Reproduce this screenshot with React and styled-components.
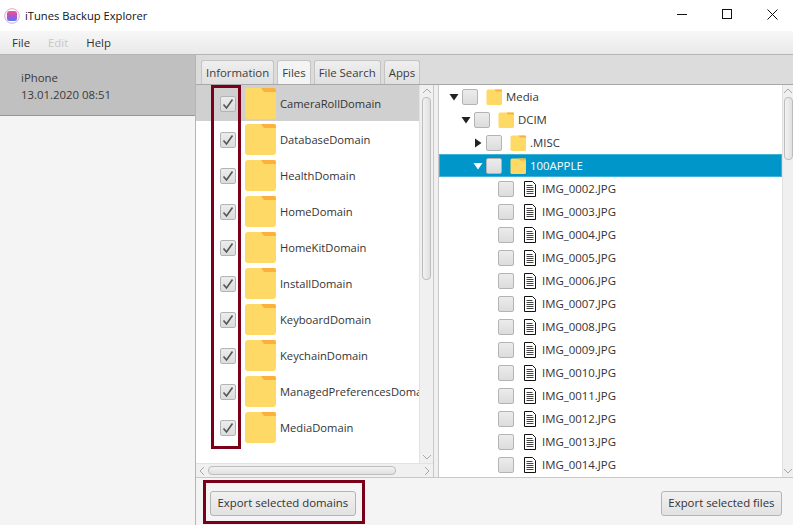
import React from 'react';
import styled, { createGlobalStyle } from 'styled-components';

const GlobalStyle = createGlobalStyle`
  html, body {
    margin: 0;
    padding: 0;
    background: #fff;
    overflow: hidden;
  }
  * { box-sizing: border-box; }
`;

const Window = styled.div`
  position: relative;
  width: 793px;
  height: 525px;
  display: flex;
  flex-direction: column;
  overflow: hidden;
  font-family: "Open Sans", "Noto Sans", sans-serif;
  font-size: 11.4px;
  color: #333;
`;

const TitleBar = styled.div`
  height: 31px;
  display: flex;
  align-items: center;
  background: #fff;
  padding-left: 4px;
  color: #111;
`;

const TitleText = styled.span`
  margin: 0 0 1px 5px;
  font-size: 11.2px;
`;

const WinButtons = styled.div`
  margin: 0 -2px 0 auto;
  align-self: flex-start;
  display: flex;
`;

const WinButton = styled.div`
  width: 45px;
  height: 29px;
  display: flex;
  align-items: center;
  justify-content: center;
`;

const MenuBar = styled.div`
  height: 24px;
  display: flex;
  align-items: center;
  padding-left: 12px;
  gap: 18px;
  background: linear-gradient(#f7f7f7, #e9e9e9);
  border-bottom: 1px solid #b5b5b5;
`;

const MenuItem = styled.span`
  color: ${p => (p.$disabled ? '#c8c8c8' : '#333')};
`;

const Main = styled.div`
  flex: 1;
  display: flex;
  min-height: 0;
`;

const Sidebar = styled.div`
  width: 196px;
  background: #f4f4f4;
  border-right: 1px solid #b5b5b5;
`;

const DeviceRow = styled.div`
  height: 61px;
  padding: 14px 0 0 21px;
  line-height: 17px;
  background: #c0c0c0;
  border-bottom: 1px solid #969696;
  color: #3a3a3a;
`;

const Content = styled.div`
  flex: 1;
  display: flex;
  flex-direction: column;
  min-width: 0;
`;

const TabHeader = styled.div`
  height: 30px;
  display: flex;
  align-items: flex-end;
  gap: 3px;
  padding-left: 5px;
  background: #dcdcdc;
  border-bottom: 1px solid #a8a8a8;
`;

const Tab = styled.div`
  height: 24px;
  padding: 0 4px;
  display: flex;
  align-items: center;
  border: 1px solid #c4c4c4;
  border-bottom: none;
  border-radius: 3px 3px 0 0;
  background: ${p => (p.$active ? '#f4f4f4' : 'linear-gradient(#efefef, #e0e0e0)')};
  color: #3c3c3c;
`;

const Panes = styled.div`
  flex: 1;
  display: flex;
  min-height: 0;
`;

const DomainPane = styled.div`
  width: 238px;
  display: flex;
  flex-direction: column;
  border-right: 1px solid #c8c8c8;
  background: #fff;
`;

const DomainBody = styled.div`
  flex: 1;
  display: flex;
  min-height: 0;
`;

const DomainList = styled.div`
  width: 224px;
  overflow: hidden;
  background: #fff;
`;

const DomainRow = styled.div`
  height: 36px;
  width: 224px;
  display: flex;
  align-items: center;
  padding-left: 24px;
  white-space: nowrap;
  overflow: hidden;
  background: ${p => (p.$selected ? '#d0d0d0' : '#fff')};
`;

const DomainName = styled.span`
  margin-left: 4px;
  font-size: 11.2px;
`;

const Check = styled.div`
  flex: none;
  width: 16px;
  height: 16px;
  display: flex;
  align-items: center;
  justify-content: center;
  border: 1px solid #b4b4b4;
  border-radius: 2px;
  background: linear-gradient(#ececec, #dcdcdc);
  margin-right: ${p => p.$gap || 0}px;
  margin-left: ${p => p.$lead || 0}px;
`;

const DomainCheck = styled(Check)`
  margin-top: 2px;
`;

const VScroll = styled.div`
  width: ${p => p.$w}px;
  flex: none;
  display: flex;
  flex-direction: column;
  align-items: center;
  background: #f0f0f0;
  border-left: 1px solid #e2e2e2;
`;

const ArrowCell = styled.div`
  height: 12px;
  display: flex;
  align-items: center;
  justify-content: center;
  flex: none;
`;

const VThumb = styled.div`
  width: 9px;
  height: ${p => p.$h}px;
  border: 1px solid #bdbdbd;
  border-radius: 4px;
  background: linear-gradient(90deg, #f2f2f2, #e0e0e0);
`;

const Spacer = styled.div`
  flex: 1;
`;

const HScroll = styled.div`
  height: 14px;
  flex: none;
  display: flex;
  align-items: center;
  background: #f0f0f0;
  border-top: 1px solid #e2e2e2;
`;

const HThumb = styled.div`
  width: 188px;
  height: 9px;
  border: 1px solid #bdbdbd;
  border-radius: 4px;
  background: linear-gradient(#f2f2f2, #e0e0e0);
`;

const HArrow = styled.div`
  width: 12px;
  display: flex;
  align-items: center;
  justify-content: center;
`;

const Gap = styled.div`
  width: 5px;
  flex: none;
  background: #f0f0f0;
  border-right: 1px solid #c8c8c8;
`;

const TreePane = styled.div`
  flex: 1;
  display: flex;
  min-width: 0;
  background: #fff;
`;

const Tree = styled.div`
  flex: 1;
  overflow: hidden;
`;

const TreeRow = styled.div`
  height: 23px;
  display: flex;
  align-items: center;
  white-space: nowrap;
  padding-left: ${p => p.$indent}px;
  background: ${p => (p.$selected ? '#0096c9' : '#fff')};
  box-shadow: ${p => (p.$selected ? 'inset 0 0 0 1px #3fb2d8' : 'none')};
  color: ${p => (p.$selected ? '#fff' : '#333')};
`;

const Disclosure = styled.div`
  width: 12px;
  flex: none;
  display: flex;
  align-items: center;
  justify-content: center;
`;

const TreeLabel = styled.span`
  margin-left: ${p => p.$gap}px;
`;

const BottomBar = styled.div`
  height: 48px;
  flex: none;
  display: flex;
  justify-content: space-between;
  align-items: flex-start;
  padding: 13px 11px 0 14px;
  background: #f4f4f4;
  border-top: 1px solid #c8c8c8;
`;

const Button = styled.button`
  height: 25px;
  padding: 0 6.5px 2px;
  font: inherit;
  color: #333;
  border: 1px solid #b4b4b4;
  border-radius: 3px;
  background: linear-gradient(#f1f1f1, #e2e2e2);
`;

const Highlight = styled.div`
  position: absolute;
  left: ${p => p.$x}px;
  top: ${p => p.$y}px;
  width: ${p => p.$w}px;
  height: ${p => p.$h}px;
  border: 3px solid #7a0019;
  pointer-events: none;
`;

const AppIcon = () => (
  <svg width="16" height="16" viewBox="0 0 16 16">
    <defs>
      <linearGradient id="appIcon" x1="0" y1="0" x2="0" y2="1">
        <stop offset="0" stopColor="#f05a78" />
        <stop offset="0.5" stopColor="#b84fd0" />
        <stop offset="1" stopColor="#4a7ff0" />
      </linearGradient>
    </defs>
    <circle cx="8" cy="8" r="7.3" fill="#fff" stroke="#d9a8d0" strokeWidth="1" />
    <rect x="3" y="3" width="10" height="10" rx="2.5" fill="url(#appIcon)" />
  </svg>
);

const FolderIcon = ({ size }) => (
  <svg width={size} height={size} viewBox="0 0 32 32" style={{ flex: 'none' }}>
    <path d="M1 4a3 3 0 0 1 3-3h26a2 2 0 0 1 2 2v26a3 3 0 0 1-3 3H4a3 3 0 0 1-3-3z" fill="#ffd966" />
    <path d="M17 1h13a2 2 0 0 1 2 2v2H20z" fill="#fbb13c" />
  </svg>
);

const FileIcon = () => (
  <svg width="12" height="16" viewBox="0 0 12 16" style={{ flex: 'none' }}>
    <path d="M.5.5h8l3 3v12H.5z" fill="#fff" stroke="#111" />
    <path d="M2.5 4.5h6M2.5 6.5h7M2.5 8.5h7M2.5 10.5h7M2.5 12.5h7" stroke="#444" />
  </svg>
);

const CheckMark = () => (
  <svg width="12" height="12" viewBox="0 0 12 12">
    <path d="M1.5 6.5 4.5 10 10.5 1.5" fill="none" stroke="#555" strokeWidth="1.6" />
  </svg>
);

const Triangle = ({ dir, color = '#222' }) => (
  <svg width="10" height="10" viewBox="0 0 10 10">
    {dir === 'down'
      ? <path d="M.5 2h9L5 8.5z" fill={color} />
      : <path d="M2 .5v9L8.5 5z" fill={color} />}
  </svg>
);

const Chevron = ({ d }) => (
  <svg width="10" height="10" viewBox="0 0 10 10">
    <path d={d} fill="none" stroke="#a8a8a8" strokeWidth="1" />
  </svg>
);

const domains = [
  'CameraRollDomain', 'DatabaseDomain', 'HealthDomain', 'HomeDomain', 'HomeKitDomain',
  'InstallDomain', 'KeyboardDomain', 'KeychainDomain', 'ManagedPreferencesDomain', 'MediaDomain',
];

const files = ['0002', '0003', '0004', '0005', '0006', '0007', '0008', '0009', '0010', '0011', '0012', '0013', '0014'];

const FolderRow = ({ indent, label, dir, selected }) => (
  <TreeRow $indent={indent} $selected={selected}>
    <Disclosure>
      <Triangle dir={dir} color={selected ? '#fff' : '#222'} />
    </Disclosure>
    <Check $gap={8} $lead={2} />
    <FolderIcon size={16} />
    <TreeLabel $gap={4}>{label}</TreeLabel>
  </TreeRow>
);

export default function App() {
  return (
    <Window>
      <GlobalStyle />
      <TitleBar>
        <AppIcon />
        <TitleText>iTunes Backup Explorer</TitleText>
        <WinButtons>
          <WinButton>
            <svg width="11" height="11" viewBox="0 0 11 11"><path d="M0 5.5h10" stroke="#111" /></svg>
          </WinButton>
          <WinButton>
            <svg width="11" height="11" viewBox="0 0 11 11"><rect x=".5" y=".5" width="9" height="9" fill="none" stroke="#111" /></svg>
          </WinButton>
          <WinButton>
            <svg width="11" height="11" viewBox="0 0 11 11"><path d="M.5.5l10 10M10.5.5l-10 10" stroke="#111" /></svg>
          </WinButton>
        </WinButtons>
      </TitleBar>
      <MenuBar>
        <MenuItem>File</MenuItem>
        <MenuItem $disabled>Edit</MenuItem>
        <MenuItem>Help</MenuItem>
      </MenuBar>
      <Main>
        <Sidebar>
          <DeviceRow>
            iPhone<br />13.01.2020 08:51
          </DeviceRow>
        </Sidebar>
        <Content>
          <TabHeader>
            <Tab>Information</Tab>
            <Tab $active>Files</Tab>
            <Tab>File Search</Tab>
            <Tab>Apps</Tab>
          </TabHeader>
          <Panes>
            <DomainPane>
              <DomainBody>
                <DomainList>
                  {domains.map((name, i) => (
                    <DomainRow key={name} $selected={i === 0}>
                      <DomainCheck $gap={8}><CheckMark /></DomainCheck>
                      <FolderIcon size={32} />
                      <DomainName>{name}</DomainName>
                    </DomainRow>
                  ))}
                </DomainList>
                <VScroll $w={14}>
                  <ArrowCell><Chevron d="M1 7l4-4 4 4" /></ArrowCell>
                  <VThumb $h={183} />
                  <Spacer />
                  <ArrowCell><Chevron d="M1 3l4 4 4-4" /></ArrowCell>
                </VScroll>
              </DomainBody>
              <HScroll>
                <HArrow><Chevron d="M7 1L3 5l4 4" /></HArrow>
                <HThumb />
                <Spacer />
                <HArrow><Chevron d="M3 1l4 4-4 4" /></HArrow>
              </HScroll>
            </DomainPane>
            <Gap />
            <TreePane>
              <Tree>
                <FolderRow indent={9} label="Media" dir="down" />
                <FolderRow indent={21} label="DCIM" dir="down" />
                <FolderRow indent={33} label=".MISC" dir="right" />
                <FolderRow indent={33} label="100APPLE" dir="down" selected />
                {files.map(n => (
                  <TreeRow key={n} $indent={59}>
                    <Check $gap={10} />
                    <FileIcon />
                    <TreeLabel $gap={6}>IMG_{n}.JPG</TreeLabel>
                  </TreeRow>
                ))}
              </Tree>
              <VScroll $w={11}>
                <ArrowCell><Chevron d="M1 7l4-4 4 4" /></ArrowCell>
                <VThumb $h={63} />
                <Spacer />
                <ArrowCell><Chevron d="M1 3l4 4 4-4" /></ArrowCell>
              </VScroll>
            </TreePane>
          </Panes>
          <BottomBar>
            <Button>Export selected domains</Button>
            <Button>Export selected files</Button>
          </BottomBar>
        </Content>
      </Main>
      <Highlight $x={211} $y={85} $w={30} $h={364} />
      <Highlight $x={203} $y={480} $w={162} $h={44} />
    </Window>
  );
}
